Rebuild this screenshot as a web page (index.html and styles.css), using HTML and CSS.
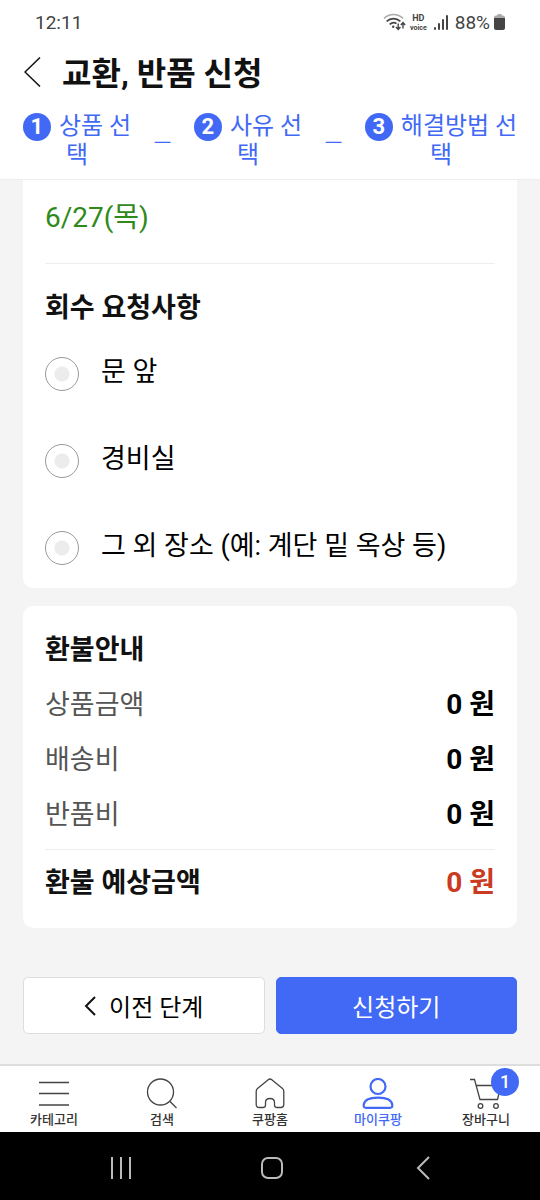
FILE: index.html
```html
<!DOCTYPE html>
<html lang="ko">
<head>
<meta charset="utf-8">
<meta name="viewport" content="width=device-width, initial-scale=1">
<title>교환, 반품 신청</title>
<link rel="stylesheet" href="styles.css">
</head>
<body>
<div class="status">
  <span class="clock">12:11</span>
  <div class="indicators">
    <svg class="wifi" width="23" height="18" viewBox="0 0 23 18" fill="none" stroke="#444" stroke-width="1.6">
      <path d="M1 5.4C6.500 .2 14.500 .2 20 5.400" stroke="#aaa"/>
      <path d="M3.600 8.400C7.500 4.700 13.500 4.700 17.400 8.400M6.600 11.400C9 9.300 11.500 9.200 13.500 10.500"/>
      <circle cx="10.200" cy="13.800" r="1.200" fill="#444" stroke="none"/>
      <path d="M15.200 10.500v5.500M13 14l2.200 2.400L17.400 14M20 15.500V10M17.800 12L20 9.600L22.200 12" stroke-width="1.400"/>
    </svg>
    <span class="hd"><b>HD</b><small>voice</small></span>
    <svg class="signal" width="14" height="15" viewBox="0 0 14 15" fill="#444">
      <rect x="0" y="12" width="2" height="3" rx="1"/><rect x="4" y="8" width="2" height="7" rx="1"/><rect x="8" y="4" width="2" height="11" rx="1"/><rect x="12" y="0" width="2" height="15" rx="1"/>
    </svg>
    <span class="percent">88%</span>
    <svg width="11" height="16" viewBox="0 0 11 16">
      <path d="M3 1.500Q3 0 4.500 0h2Q8 0 8 1.500h1Q11 1.500 11 3.500V5H0V3.500Q0 1.500 2 1.500z" fill="#aaa"/>
      <path d="M0 4h11v10q0 2-2 2H2q-2 0-2-2z" fill="#444"/>
    </svg>
  </div>
</div>

<header class="header">
  <div class="title-row">
    <button class="back" type="button" aria-label="뒤로">
      <svg width="17" height="30" viewBox="0 0 17 30" fill="none" stroke="#111" stroke-width="1.500"><path d="M16 .5L1 15L16 29.500"/></svg>
    </button>
    <h1>교환, 반품 신청</h1>
  </div>
  <div class="steps">
    <div class="step"><span class="num">1</span>상품 선택</div>
    <span class="dash">_</span>
    <div class="step"><span class="num">2</span>사유 선택</div>
    <span class="dash">_</span>
    <div class="step wide"><span class="num">3</span>해결방법 선택</div>
  </div>
</header>

<main class="content">
  <section class="card pickup">
    <p class="date">6/27(목)</p>
    <fieldset class="places">
      <legend>회수 요청사항</legend>
      <label class="place"><input type="radio" name="place"><span>문 앞</span></label>
      <label class="place"><input type="radio" name="place"><span>경비실</span></label>
      <label class="place"><input type="radio" name="place"><span>그 외 장소 (예: 계단 밑 옥상 등)</span></label>
    </fieldset>
  </section>

  <section class="card refund">
    <h2>환불안내</h2>
    <table class="amounts">
      <tbody>
        <tr><th scope="row">상품금액</th><td>0 원</td></tr>
        <tr><th scope="row">배송비</th><td>0 원</td></tr>
        <tr><th scope="row">반품비</th><td>0 원</td></tr>
      </tbody>
      <tfoot>
        <tr><th scope="row">환불 예상금액</th><td>0 원</td></tr>
      </tfoot>
    </table>
  </section>

  <div class="actions">
    <button class="btn" type="button">
      <svg width="12" height="20" viewBox="0 0 12 20" fill="none" stroke="#111" stroke-width="2"><path d="M11 1L2 10L11 19"/></svg>
      이전 단계
    </button>
    <button class="btn primary" type="button">신청하기</button>
  </div>
</main>

<nav class="tabs">
  <a class="tab" href="#category">
    <svg width="32" height="32" viewBox="0 0 32 32" fill="none" stroke="#444" stroke-width="1.300"><path d="M1 4.500H31M1 15.500H31M1 27H31"/></svg>
    <span>카테고리</span>
  </a>
  <a class="tab" href="#search">
    <svg width="32" height="32" viewBox="0 0 32 32" fill="none" stroke="#444" stroke-width="1.300"><circle cx="14.500" cy="14" r="13"/><path d="M23.800 23.300L30.500 30"/></svg>
    <span>검색</span>
  </a>
  <a class="tab" href="#home">
    <svg width="32" height="32" viewBox="0 0 32 32" fill="none" stroke="#444" stroke-width="1.300"><path d="M14.200 1.700Q16 .3 17.800 1.700L28.500 10.500Q29.800 11.600 29.800 13.500V26.500Q29.800 29.500 26.800 29.500H23Q20.500 29.500 20.500 27V24.500Q20.500 20.500 16 20.500Q11.500 20.500 11.500 24.500V27Q11.500 29.500 9 29.500H5.200Q2.200 29.500 2.200 26.500V13.500Q2.200 11.600 3.500 10.500z"/></svg>
    <span>쿠팡홈</span>
  </a>
  <a class="tab current" href="#my" aria-current="page">
    <svg width="32" height="32" viewBox="0 0 32 32" fill="none" stroke="#4169f5" stroke-width="2.200"><circle cx="16" cy="8.500" r="7.500"/><path d="M1.700 27Q2.500 19.700 16 19.700T30.300 27Q30.600 29.900 28 29.900H4Q1.400 29.900 1.700 27z"/></svg>
    <span>마이쿠팡</span>
  </a>
  <a class="tab" href="#cart">
    <svg width="32" height="32" viewBox="0 0 32 32" fill="none" stroke="#444" stroke-width="1.300"><path d="M0 1.500H4.500L10 21.500H27.500L31 7.500H6.500"/><circle cx="10.500" cy="28" r="2.300"/><circle cx="26" cy="28" r="2.300"/></svg>
    <span>장바구니</span>
    <span class="badge">1</span>
  </a>
</nav>

<div class="system">
  <button type="button" aria-label="최근 앱"><svg width="24" height="24" viewBox="0 0 24 24" fill="none" stroke="#bbb" stroke-width="2"><path d="M3 1V23M12 1V23M21 1V23"/></svg></button>
  <button type="button" aria-label="홈"><svg width="24" height="24" viewBox="0 0 24 24" fill="none" stroke="#bbb" stroke-width="2"><rect x="2" y="2" width="20" height="20" rx="6"/></svg></button>
  <button type="button" aria-label="뒤로"><svg width="24" height="24" viewBox="0 0 24 24" fill="none" stroke="#bbb" stroke-width="2"><path d="M18 1L7 12L18 23"/></svg></button>
</div>
</body>
</html>
```
FILE: styles.css
```css
* { box-sizing: border-box; }

body {
  margin: 0;
  min-height: 100vh;
  display: flex;
  flex-direction: column;
  background: #f4f4f4;
  color: #111;
  font-family: Roboto, "Noto Sans CJK KR", sans-serif;
}

button {
  font: inherit;
  color: inherit;
  border: 0;
  padding: 0;
  background: none;
}

h1, h2, p { margin: 0; }

.status {
  display: flex;
  justify-content: space-between;
  align-items: center;
  height: 44px;
  padding: 0 35px;
  background: #fff;
  color: #444;
}

.clock { font-size: 19px; }

.indicators {
  display: flex;
  align-items: center;
  gap: 4px;
}

.signal { margin: 0 3px; }

.hd {
  display: flex;
  flex-direction: column;
  align-items: center;
}

.hd b { font-size: 9px; line-height: 11px; }
.hd small { font-size: 7px; font-weight: 700; line-height: 8px; }
.percent { font-size: 19px; }

.header {
  padding: 0 22px 10px;
  background: #fff;
  border-bottom: 1px solid #eee;
}

.title-row {
  display: flex;
  align-items: center;
  gap: 21px;
  height: 56px;
  padding-left: 2px;
}

.back { display: flex; }

h1 {
  padding-top: 3px;
  font-size: 32px;
  line-height: 40px;
}

.steps {
  display: flex;
  justify-content: space-between;
  padding-top: 12px;
  color: #4169f5;
  font-size: 24px;
  line-height: 28px;
}

.step {
  width: 110px;
  text-align: center;
  word-break: break-all;
}

.step.wide { width: 154px; }

.dash {
  font-family: "Noto Sans CJK KR", sans-serif;
  font-size: 30px;
  font-weight: 300;
}

.num {
  display: inline-block;
  width: 28px;
  margin-right: 8px;
  border-radius: 50%;
  background: #4169f5;
  color: #fff;
  font-size: 22px;
  font-weight: 700;
}

.content {
  flex: 1;
  padding: 0 23px 30px;
}

.card {
  padding: 0 22px;
  border-radius: 10px;
  background: #fff;
}

.pickup {
  padding-bottom: 20px;
  border-top-left-radius: 0;
  border-top-right-radius: 0;
}

.date {
  padding: 18px 0 25px;
  border-bottom: 1px solid #eee;
  color: #2f8a1a;
  font-size: 28px;
  line-height: 40px;
}

.places {
  display: flex;
  flex-direction: column;
  gap: 47px;
  margin: 0;
  padding: 0;
  border: 0;
}

.places legend {
  padding: 24px 0 26px;
  font-size: 27px;
  font-weight: 700;
  line-height: 40px;
}

.place {
  display: flex;
  align-items: center;
  gap: 22px;
  height: 40px;
  color: #000;
  font-size: 27px;
  line-height: 40px;
}

.place span { padding-bottom: 4px; }

.place input {
  appearance: none;
  width: 34px;
  height: 34px;
  margin: 0;
  border: 1px solid #999;
  border-radius: 50%;
  background: radial-gradient(circle, #ececec 7px, #fff 8px);
}

.place input:checked {
  background: radial-gradient(circle, #4169f5 7px, #fff 8px);
}

.refund {
  margin-top: 18px;
  padding-top: 24px;
  padding-bottom: 17px;
}

h2 { font-size: 27px; line-height: 40px; }

.amounts {
  width: 100%;
  margin-top: 8px;
  border-collapse: collapse;
  font-size: 27px;
  line-height: 40px;
}

.amounts th,
.amounts td { padding: 7px 0 8px; }

.amounts th {
  color: #555;
  font-weight: 400;
  text-align: left;
}

.amounts td {
  color: #000;
  font-size: 28px;
  font-weight: 700;
  text-align: right;
}

.amounts tbody tr:last-child > * { padding-bottom: 14px; }

.amounts tfoot th,
.amounts tfoot td {
  padding: 13px 0 8px;
  border-top: 1px solid #eee;
}

.amounts tfoot th { color: #111; font-weight: 700; }
.amounts tfoot td { color: #cb3a22; }

.actions {
  display: flex;
  gap: 11px;
  margin-top: 49px;
}

.btn {
  flex: 1;
  display: flex;
  align-items: center;
  justify-content: center;
  gap: 13px;
  height: 57px;
  border: 1px solid #ddd;
  border-radius: 5px;
  background: #fff;
  color: #000;
  font-size: 24px;
}

.btn.primary {
  border-color: #4169f5;
  background: #4169f5;
  color: #fff;
}

.tabs {
  display: flex;
  border-top: 2px solid #ddd;
  background: #fff;
}

.tab {
  position: relative;
  flex: 1;
  display: flex;
  flex-direction: column;
  align-items: center;
  padding: 12px 0 2px;
  color: #333;
  font-size: 13px;
  font-weight: 500;
  line-height: 20px;
  text-decoration: none;
}

.tab.current { color: #4169f5; }

.badge {
  position: absolute;
  top: 2px;
  left: 50%;
  width: 28px;
  margin-left: 5px;
  border-radius: 50%;
  background: #4169f5;
  color: #fff;
  font-size: 18px;
  line-height: 28px;
  text-align: center;
}

.system {
  display: flex;
  justify-content: center;
  gap: 127px;
  padding: 24px 0 20px 4px;
  background: #000;
}

.system button { display: flex; }
```
